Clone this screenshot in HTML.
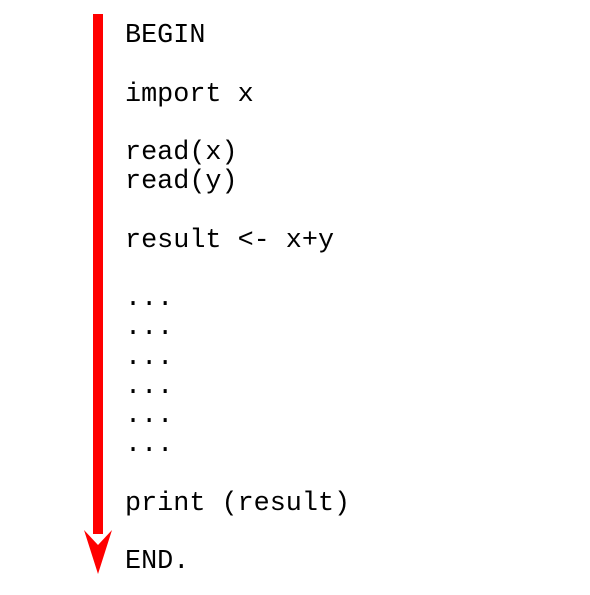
<!DOCTYPE html>
<html><head><style>html,body{margin:0;padding:0;background:#fff;}</style></head>
<body>
<svg width="590" height="590" xmlns="http://www.w3.org/2000/svg">
<rect width="590" height="590" fill="#fff"/>
<rect x="93" y="14" width="10" height="520" fill="#ff0000"/>
<path d="M84,530 L98,574 L112,530 L98,545 Z" fill="#ff0000"/>
<g font-family="Liberation Mono, monospace" font-size="26.8" fill="#000">
<text x="125" y="42">BEGIN</text>
<text x="125" y="101">import x</text>
<text x="125" y="159">read(x)</text>
<text x="125" y="188">read(y)</text>
<text x="125" y="247">result &lt;- x+y</text>
<text x="125" y="305">...</text>
<text x="125" y="334">...</text>
<text x="125" y="364">...</text>
<text x="125" y="393">...</text>
<text x="125" y="422">...</text>
<text x="125" y="451">...</text>
<text x="125" y="510">print (result)</text>
<text x="125" y="568">END.</text>
</g>
</svg>
</body></html>
